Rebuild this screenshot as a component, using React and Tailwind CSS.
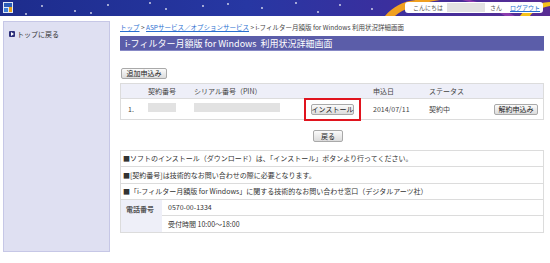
import React from 'react';

const font = { fontFamily: '"Noto Sans CJK JP", "Liberation Sans", sans-serif' };

// Small grey button used across the page
const Btn = ({ children, className = '' }) => (
  <button
    className={`h-[11px] px-0 leading-none text-[7px] text-[#222] whitespace-nowrap flex items-center justify-center border border-[#a9a9a9] rounded-[2px] bg-gradient-to-b from-[#fbfbfb] to-[#dcdcdc] ${className}`}
  >
    {children}
  </button>
);

// Blurred-out placeholder (masked personal data)
const Blur = ({ className = '' }) => <span className={`inline-block h-[9px] bg-[#e2e2e2] blur-[0.6px] ${className}`} />;

const Banner = () => (
  <svg className="absolute inset-0" width="550" height="16" viewBox="0 0 550 16">
    <defs>
      <linearGradient id="bg" x1="0" x2="1" y1="0" y2="0">
        <stop offset="0" stopColor="#1d2c8c" />
        <stop offset="0.45" stopColor="#2737a3" />
        <stop offset="0.7" stopColor="#3a2f9e" />
        <stop offset="1" stopColor="#5a2d93" />
      </linearGradient>
    </defs>
    <rect width="550" height="16" fill="url(#bg)" />
    <path d="M385 16 C395 4 410 -2 430 0 L440 0 C420 3 402 9 395 16 Z" fill="#f0a020" />
    <path d="M520 16 C525 8 535 3 550 2 L550 6 C540 8 532 12 530 16 Z" fill="#f6c21c" />
    <path d="M470 0 C490 6 505 10 515 16 L505 16 C495 10 482 5 462 0 Z" fill="#8a3cae" />
    {[[26, 14], [42, 6], [75, 11], [91, 13], [108, 5], [150, 3], [166, 9], [203, 6], [228, 4], [262, 8], [296, 3], [318, 12], [340, 5], [372, 9], [455, 3], [498, 11]].map(([x, y], i) => (
      <circle key={i} cx={x} cy={y} r="0.9" fill="#fff" opacity="0.85" />
    ))}
    <rect x="3" y="2" width="10" height="11" fill="#dfe8f6" />
    <rect x="4" y="3" width="8" height="4" fill="#2a5cb8" />
    <rect x="4" y="8" width="4" height="4" fill="#3f7fd6" />
    <rect x="9" y="7" width="3" height="5" fill="#e8a21a" />
  </svg>
);

const App = () => {
  return (
    <div className="w-[550px] h-[263px] bg-white overflow-hidden text-[#333]" style={font}>
      {/* header */}
      <div className="relative h-[16px] flex justify-end items-start pt-[2px] pr-[7px]">
        <Banner />
        <div className="relative h-[11px] w-[138px] bg-white rounded-[3px] flex items-center pl-[8px] text-[6px] leading-none text-[#555] whitespace-nowrap">
          <span>こんにちは</span>
          <Blur className="w-[38px] h-[7px] ml-[4px]" />
          <span className="ml-[5px]">さん</span>
          <span className="ml-[8px] text-[#2a6fd0] underline">ログアウト</span>
        </div>
      </div>

      <div className="flex pl-[3px] pt-[5px] gap-[10px]">
        {/* sidebar */}
        <div className="w-[107px] h-[231px] bg-[#dfe0f2] border border-[#c6c7e6]">
          <div className="flex items-center gap-[2px] pl-[5px] pt-[7px] text-[7px] text-[#333]">
            <span className="w-[6px] h-[6px] bg-[#2c2f7a] rounded-[1px] flex items-center justify-center">
              <span className="border-l-[3px] border-l-white border-y-[2px] border-y-transparent" />
            </span>
            <span>トップに戻る</span>
          </div>
        </div>

        {/* main */}
        <div className="w-[424px]">
          <div className="h-[13px] pt-[2px] text-[6.5px] leading-[9px] text-[#444] whitespace-nowrap">
            <span className="text-[#2a6fd0] underline">トップ</span> &gt;{' '}
            <span className="text-[#2a6fd0] underline">ASPサービス／オプションサービス</span> &gt; i-フィルター月額版 for Windows 利用状況詳細画面
          </div>
          <div className="mt-[2px] h-[15px] bg-[#5b5da9] border-b border-[#8789c6] text-white text-[9px] leading-[15px] pl-[5px] whitespace-nowrap">
            i-フィルター月額版 for Windows&nbsp;&nbsp;利用状況詳細画面
          </div>

          <div className="mt-[17px] pl-[1px]">
            <Btn className="w-[46px]">追加申込み</Btn>
          </div>

          {/* contract table */}
          <div className="mt-[4px] border border-[#dcdcdc] text-[7px]">
            <div className="h-[15px] bg-[#eeeff8] flex items-center border-b border-[#dcdcdc] text-[#444]">
              <span className="w-[27px]" />
              <span className="w-[46px]">契約番号</span>
              <span className="w-[179px]">シリアル番号（PIN）</span>
              <span className="w-[56px]">申込日</span>
              <span>ステータス</span>
            </div>
            <div className="h-[20px] flex items-center text-[#444]">
              <span className="w-[27px] pl-[7px]">1.</span>
              <span className="w-[46px]"><Blur className="w-[28px]" /></span>
              <span className="w-[110px]"><Blur className="w-[86px]" /></span>
              <span className="w-[69px] flex">
                <span className="border-2 border-[#e0141e] px-[5px] py-[4px]">
                  <Btn className="w-[43px]">インストール</Btn>
                </span>
              </span>
              <span className="w-[56px]">2014/07/11</span>
              <span className="w-[65px]">契約中</span>
              <Btn className="w-[44px]">解約申込み</Btn>
            </div>
          </div>

          <div className="mt-[10px] flex justify-center pr-[8px]">
            <Btn className="w-[30px] h-[12px]">戻る</Btn>
          </div>

          {/* info box */}
          <div className="mt-[8px] border border-[#dcdcdc] text-[7px] text-[#333]">
            <div className="h-[16px] flex items-center pl-[2px] border-b border-[#dcdcdc]">■ソフトのインストール（ダウンロード）は、「インストール」ボタンより行ってください。</div>
            <div className="h-[17px] flex items-center pl-[2px] border-b border-[#dcdcdc]">■[契約番号]は技術的なお問い合わせの際に必要となります。</div>
            <div className="h-[16px] flex items-center pl-[2px] border-b border-[#dcdcdc]">■「i-フィルター月額版 for Windows」に関する技術的なお問い合わせ窓口（デジタルアーツ社）</div>
            <div className="flex">
              <div className="w-[41px] bg-[#eeeff8] pl-[5px] pt-[4px] font-bold text-[#555]">電話番号</div>
              <div className="flex-1">
                <div className="h-[16px] flex items-center pl-[6px] border-b border-[#dcdcdc]">0570-00-1334</div>
                <div className="h-[16px] flex items-center pl-[6px]">受付時間 10:00～18:00</div>
              </div>
            </div>
          </div>
        </div>
      </div>
    </div>
  );
};

export default App;
